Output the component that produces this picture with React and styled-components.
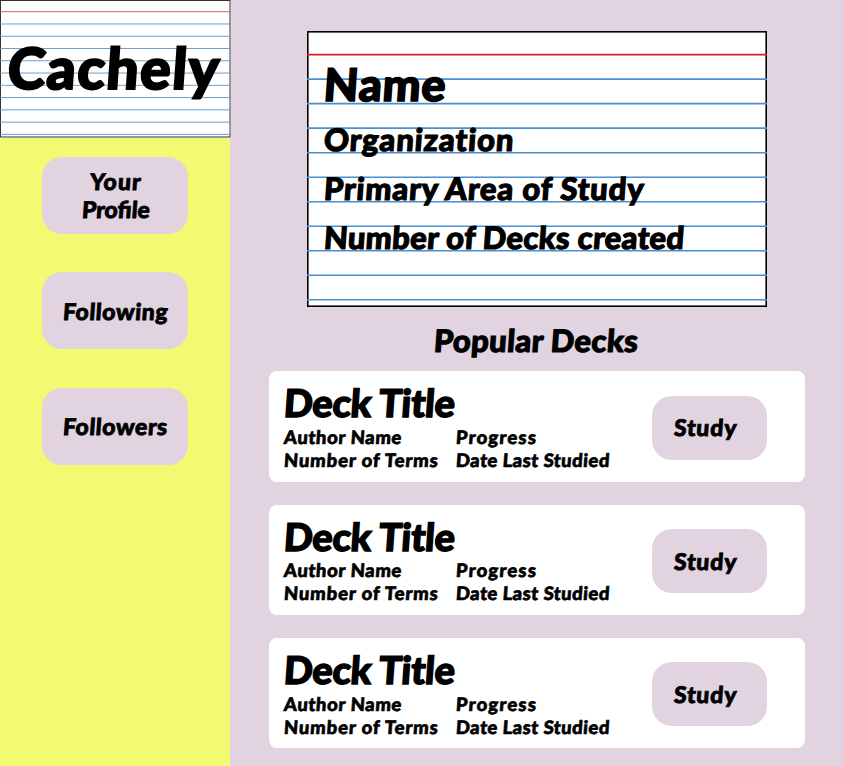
import React from "react";
import styled, { createGlobalStyle } from "styled-components";

const lilac = "#e1d4e0";
const lime = "#f1fa70";

const GlobalStyle = createGlobalStyle`
  *, *::before, *::after { box-sizing: border-box; }
  body { margin: 0; background: ${lilac}; }
`;

const Page = styled.div`
  display: flex;
  width: 844px;
  height: 766px;
  overflow: hidden;
  background: ${lilac};
  color: #000;
  font-family: Lato, "Open Sans", sans-serif;
  font-weight: 900;
`;

const Lettering = styled.span`
  display: block;
  width: max-content;
  font-size: ${(p) => p.$size}px;
  line-height: ${(p) => p.$line}px;
  letter-spacing: ${(p) => p.$track || 0}px;
  white-space: nowrap;
  transform: skewX(-4deg);
  -webkit-text-stroke: 0.036em #000;
  stroke-linejoin: round;
  paint-order: stroke fill;
`;

const Sidebar = styled.aside`
  flex: none;
  width: 230px;
  display: flex;
  flex-direction: column;
  background: ${lime};
`;

const Ruling = styled.svg`
  position: absolute;
  inset: 0;
  width: 100%;
  height: 100%;
`;

const Brand = styled.header`
  position: relative;
  width: 230.5px;
  height: 137.5px;
  padding: 33px 0 0 8px;
  background: #fff;
`;

const Nav = styled.nav`
  display: flex;
  flex-direction: column;
  align-items: center;
  gap: 38.5px;
  padding-top: 19px;
`;

const NavButton = styled.button`
  display: flex;
  flex-direction: column;
  align-items: center;
  justify-content: center;
  width: 145.5px;
  height: 77.2px;
  padding: 1px 0 0 1px;
  border: 0;
  border-radius: 20px;
  background: ${lilac};
  color: inherit;
  font: inherit;
`;

const Main = styled.main`
  flex: 1;
  display: flex;
  flex-direction: column;
  padding: 30.5px 39px 0;
`;

const ProfileCard = styled.section`
  position: relative;
  width: 460px;
  height: 276px;
  margin-left: 38px;
  padding: 25px 0 0 17px;
  background: #fff;
`;

const FactList = styled.div`
  display: flex;
  flex-direction: column;
  padding-top: 3px;
`;

const SectionTitle = styled.h2`
  display: flex;
  justify-content: center;
  margin: 12px 2px 9.3px 0;
  font-size: inherit;
  font-weight: inherit;
`;

const DeckList = styled.div`
  display: flex;
  flex-direction: column;
  gap: 23px;
`;

const DeckCard = styled.article`
  display: flex;
  align-items: flex-start;
  justify-content: space-between;
  width: 536px;
  height: 110.4px;
  padding: 9px 38px 0 15px;
  border-radius: 8px;
  background: #fff;
`;

const DeckDetails = styled.div`
  display: grid;
  grid-template-columns: 172px auto;
  grid-template-rows: 45.5px 23px 23px;
`;

const DeckTitle = styled.div`
  grid-column: 1 / -1;
`;

const StudyButton = styled(NavButton)`
  width: 115px;
  height: 64px;
  margin-top: 15.3px;
  padding-right: 8px;
`;

function RuledPaper({ width, height, unit, stroke, border, edge, red, blue }) {
  const rows = Array.from({ length: 10 }, (_, i) => unit.first + unit.step * (i + 1));
  return (
    <Ruling viewBox={`0 0 ${width} ${height}`}>
      <rect
        x={border / 2}
        y={border / 2}
        width={width - border}
        height={height - border}
        fill="none"
        stroke={edge}
        strokeWidth={border}
      />
      <path d={`M0 ${unit.first}H${width}`} stroke={red} strokeWidth={stroke} />
      {rows.map((y) => (
        <path key={y} d={`M0 ${y}H${width}`} stroke={blue} strokeWidth={stroke} />
      ))}
    </Ruling>
  );
}

const facts = [
  { text: "Organization", track: 0.9 },
  { text: "Primary Area of Study", track: 0.84 },
  { text: "Number of Decks created", track: 0.33 },
];

const links = [
  [{ text: "Your", track: 1.1 }, { text: "Profile", track: 0 }],
  [{ text: "Following", track: 0.6 }],
  [{ text: "Followers", track: 0.6 }],
];

const details = [
  { text: "Author Name", track: 0.6 },
  { text: "Progress", track: 1.2 },
  { text: "Number of Terms", track: 0.85 },
  { text: "Date Last Studied", track: 0.45 },
];

function Deck() {
  return (
    <DeckCard>
      <DeckDetails>
        <DeckTitle>
          <Lettering $size={38.2} $line={44} $track={-0.3}>Deck Title</Lettering>
        </DeckTitle>
        {details.map((d) => (
          <Lettering key={d.text} $size={18.5} $line={23} $track={d.track}>
            {d.text}
          </Lettering>
        ))}
      </DeckDetails>
      <StudyButton>
        <Lettering $size={23} $line={27.5} $track={0.8}>Study</Lettering>
      </StudyButton>
    </DeckCard>
  );
}

export default function App() {
  return (
    <>
      <GlobalStyle />
      <Page>
        <Sidebar>
          <Brand>
            <RuledPaper
              width={230.5}
              height={137.5}
              unit={{ first: 11.7, step: 12.27 }}
              stroke={0.9}
              border={1}
              edge="#333"
              red="#d0524e"
              blue="#5b95cb"
            />
            <Lettering $size={57} $line={68} $track={1.5}>Cachely</Lettering>
          </Brand>
          <Nav>
            {links.map((lines) => (
              <NavButton key={lines[0].text}>
                {lines.map((l) => (
                  <Lettering key={l.text} $size={23} $line={27.5} $track={l.track}>
                    {l.text}
                  </Lettering>
                ))}
              </NavButton>
            ))}
          </Nav>
        </Sidebar>
        <Main>
          <ProfileCard>
            <RuledPaper
              width={460}
              height={276}
              unit={{ first: 23.6, step: 24.52 }}
              stroke={1.6}
              border={1.6}
              edge="#000"
              red="#d02020"
              blue="#4a8fd0"
            />
            <Lettering $size={45} $line={56} $track={0.8}>Name</Lettering>
            <FactList>
              {facts.map((f) => (
                <Lettering key={f.text} $size={31} $line={49.1} $track={f.track}>
                  {f.text}
                </Lettering>
              ))}
            </FactList>
          </ProfileCard>
          <SectionTitle>
            <Lettering $size={31} $line={43.5} $track={0.35}>Popular Decks</Lettering>
          </SectionTitle>
          <DeckList>
            <Deck />
            <Deck />
            <Deck />
          </DeckList>
        </Main>
      </Page>
    </>
  );
}
